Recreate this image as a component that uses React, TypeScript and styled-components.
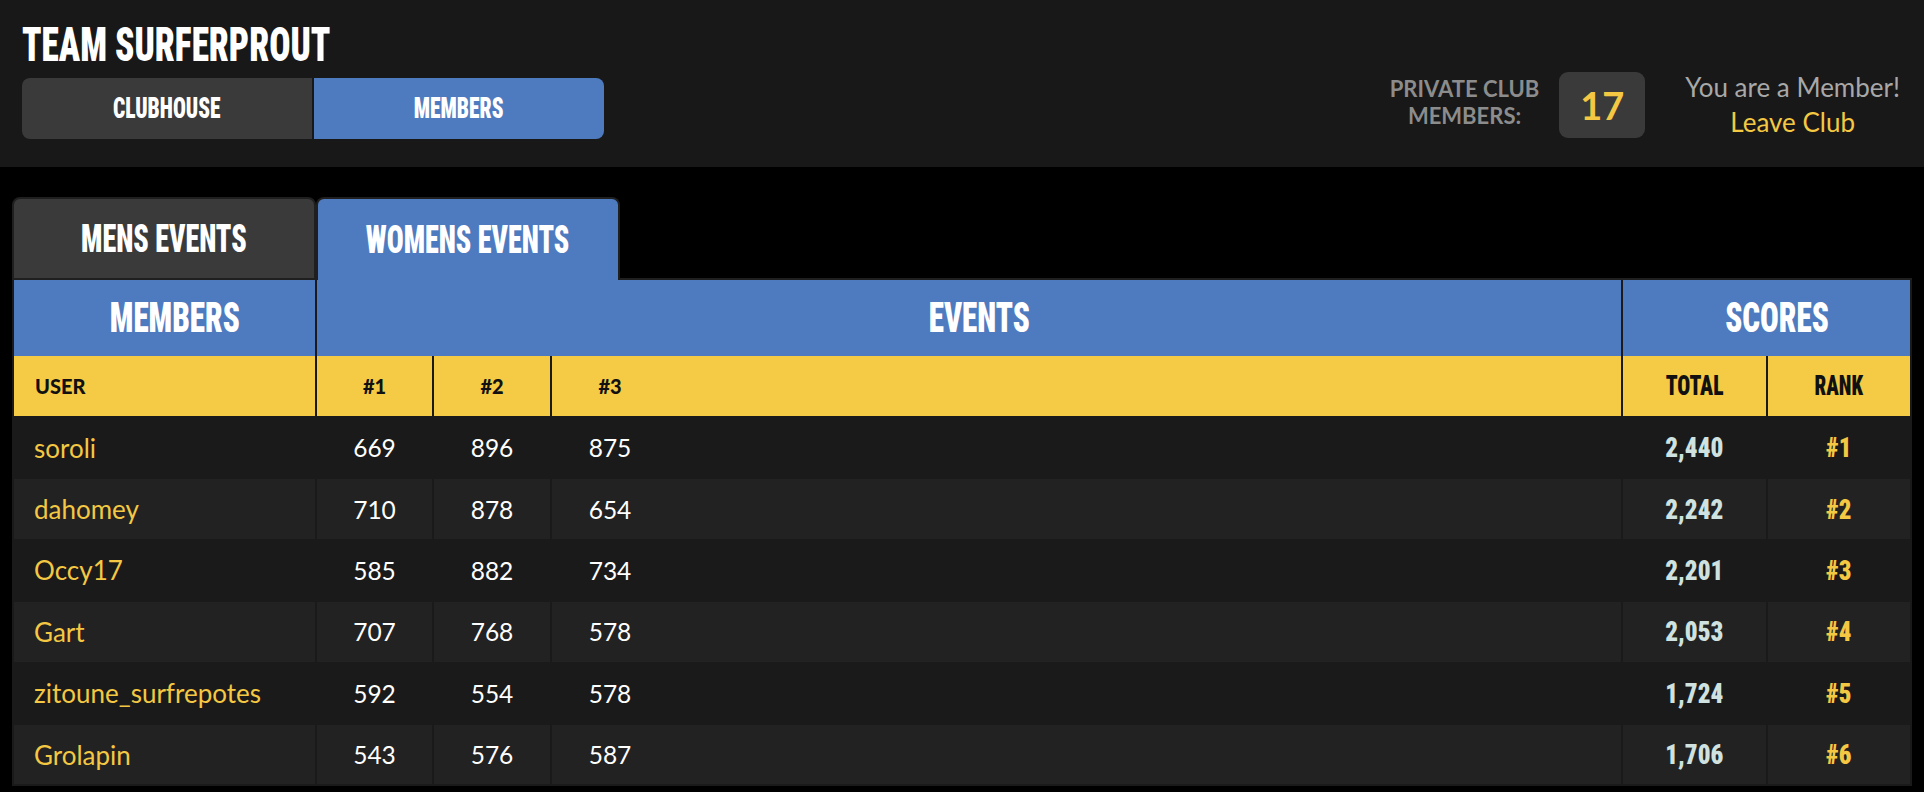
import React from "react";
import styled, { createGlobalStyle } from "styled-components";

const BLUE = "#4e7bbf";
const YELLOW = "#f5ca45";
const GOLD = "#f4c842";
const DARK = "#1a1a1a";

const GlobalStyle = createGlobalStyle`
  html, body { margin: 0; padding: 0; background: #000; }
  body { font-family: Lato, "Open Sans", sans-serif; color: #fff; }
  *, *::before, *::after { box-sizing: border-box; }
`;

const Display = styled.span<{ $size: number; $origin?: string; $sx?: number }>`
  display: inline-block;
  font-family: Roboto, "Open Sans", sans-serif;
  font-stretch: 75%;
  font-weight: 900;
  font-size: ${(p) => p.$size}px;
  line-height: 1;
  white-space: nowrap;
  transform: scaleX(${(p) => p.$sx ?? 0.74});
  transform-origin: ${(p) => p.$origin ?? "center"};
`;

/* ---------- top bar ---------- */
const TopBar = styled.header`
  height: 167px;
  background: #181818;
  padding: 21px 24px 0 22px;
  display: flex;
  justify-content: space-between;
  align-items: flex-start;
`;

const Brand = styled.div`
  display: flex;
  flex-direction: column;
  gap: 9px;
`;

const Title = styled.h1`
  margin: 0;
  height: 48px;
  line-height: 48px;
  color: #fff;
`;

const NavGroup = styled.nav`
  display: flex;
  gap: 2px;
  width: 582px;
  border-radius: 8px;
  overflow: hidden;
`;

const NavButton = styled.button<{ $active?: boolean }>`
  flex: 1;
  height: 61px;
  border: 0;
  padding: 0;
  background: ${(p) => (p.$active ? BLUE : "#3a3a3a")};
  color: #fff;
  display: flex;
  align-items: center;
  justify-content: center;
  cursor: pointer;
`;

const ClubInfo = styled.div`
  display: flex;
  align-items: center;
  padding-top: 51px;
`;

const CountLabel = styled.div`
  font-weight: 700;
  font-size: 22px;
  line-height: 27px;
  color: #8c8c8c;
  text-align: center;
  margin-top: -8px;
`;

const CountBox = styled.div`
  width: 86px;
  height: 66px;
  margin: -3px 40px 0 20px;
  background: #3a3a3a;
  border-radius: 9px;
  display: flex;
  align-items: center;
  justify-content: center;
  font-weight: 700;
  font-size: 38px;
  color: ${GOLD};
`;

const Membership = styled.div`
  text-align: center;
  font-size: 26px;
  line-height: 35px;
  color: #a8a8a8;
  margin-top: -2px;
`;

const LeaveLink = styled.a`
  display: block;
  color: ${GOLD};
  text-decoration: none;
  cursor: pointer;
`;

/* ---------- main ---------- */
const Main = styled.main`
  padding: 30px 12px 0;
`;

const TabBar = styled.div`
  display: flex;
  position: relative;
  z-index: 1;
  margin-bottom: -2px;
`;

const Tab = styled.button<{ $active?: boolean }>`
  width: 304px;
  height: 83px;
  padding: 0;
  border: 2px solid #1f1f1f;
  border-bottom: ${(p) => (p.$active ? "0" : "2px solid #1f1f1f")};
  border-radius: 8px 8px 0 0;
  background: ${(p) => (p.$active ? BLUE : "#3a3a3a")};
  color: #fff;
  display: flex;
  align-items: center;
  justify-content: center;
  cursor: pointer;
`;

const Board = styled.table`
  width: 100%;
  table-layout: fixed;
  border-collapse: separate;
  border-spacing: 2px 0;
  background: ${DARK};
  border-top: 2px solid #1f1f1f;
  padding-bottom: 2px;
`;

const GroupHead = styled.th`
  height: 76px;
  padding: 0 0 0 20px;
  background: ${BLUE};
  color: #fff;
  text-align: center;
  vertical-align: middle;
`;

const ColHead = styled.th<{ $left?: boolean }>`
  height: 60px;
  padding: 0 0 0 ${(p) => (p.$left ? "21px" : "0")};
  background: ${YELLOW};
  color: #111;
  text-align: ${(p) => (p.$left ? "left" : "center")};
  vertical-align: middle;
  font-weight: 900;
  font-size: 20px;
`;

const Cell = styled.td<{ $even: boolean; $left?: boolean }>`
  height: 61.4px;
  padding: 0 0 0 ${(p) => (p.$left ? "20px" : "0")};
  border-top: 2px solid ${DARK};
  background: ${(p) => (p.$even ? "#222222" : DARK)};
  text-align: ${(p) => (p.$left ? "left" : "center")};
  vertical-align: middle;
  font-size: 24.5px;
  color: #fff;
  white-space: nowrap;
`;

const UserName = styled.span`
  color: ${GOLD};
  font-size: 26px;
`;

const Slot = styled.span`
  display: block;
  width: 116px;
  text-align: center;
`;

const TotalValue = styled(Display)`
  color: #cfe2e0;
`;

const RankValue = styled(Display)`
  color: ${GOLD};
`;

type Row = { user: string; s: [number, number, number]; total: string; rank: number };

const rows: Row[] = [
  { user: "soroli", s: [669, 896, 875], total: "2,440", rank: 1 },
  { user: "dahomey", s: [710, 878, 654], total: "2,242", rank: 2 },
  { user: "Occy17", s: [585, 882, 734], total: "2,201", rank: 3 },
  { user: "Gart", s: [707, 768, 578], total: "2,053", rank: 4 },
  { user: "zitoune_surfrepotes", s: [592, 554, 578], total: "1,724", rank: 5 },
  { user: "Grolapin", s: [543, 576, 587], total: "1,706", rank: 6 },
];

export default function App() {
  return (
    <>
      <GlobalStyle />
      <TopBar>
        <Brand>
          <Title>
            <Display $size={48} $origin="left" $sx={0.735}>
              TEAM SURFERPROUT
            </Display>
          </Title>
          <NavGroup>
            <NavButton>
              <Display $size={29}>CLUBHOUSE</Display>
            </NavButton>
            <NavButton $active>
              <Display $size={29}>MEMBERS</Display>
            </NavButton>
          </NavGroup>
        </Brand>
        <ClubInfo>
          <CountLabel>
            PRIVATE CLUB
            <br />
            MEMBERS:
          </CountLabel>
          <CountBox>17</CountBox>
          <Membership>
            You are a Member!
            <LeaveLink>Leave Club</LeaveLink>
          </Membership>
        </ClubInfo>
      </TopBar>

      <Main>
        <TabBar>
          <Tab>
            <Display $size={38}>MENS EVENTS</Display>
          </Tab>
          <Tab $active>
            <Display $size={38}>WOMENS EVENTS</Display>
          </Tab>
        </TabBar>
        <Board>
          <colgroup>
            <col style={{ width: 301 }} />
            <col style={{ width: 115 }} />
            <col style={{ width: 116 }} />
            <col />
            <col style={{ width: 143 }} />
            <col style={{ width: 142 }} />
          </colgroup>
          <thead>
            <tr>
              <GroupHead>
                <Display $size={42}>MEMBERS</Display>
              </GroupHead>
              <GroupHead colSpan={3}>
                <Display $size={42}>EVENTS</Display>
              </GroupHead>
              <GroupHead colSpan={2}>
                <Display $size={42}>SCORES</Display>
              </GroupHead>
            </tr>
            <tr>
              <ColHead $left>USER</ColHead>
              <ColHead>#1</ColHead>
              <ColHead>#2</ColHead>
              <ColHead $left={false}>
                <Slot>#3</Slot>
              </ColHead>
              <ColHead>
                <Display $size={28} $sx={0.77}>
                  TOTAL
                </Display>
              </ColHead>
              <ColHead>
                <Display $size={28}>RANK</Display>
              </ColHead>
            </tr>
          </thead>
          <tbody>
            {rows.map((r, i) => {
              const even = i % 2 === 1;
              return (
                <tr key={r.user}>
                  <Cell $even={even} $left>
                    <UserName>{r.user}</UserName>
                  </Cell>
                  <Cell $even={even}>{r.s[0]}</Cell>
                  <Cell $even={even}>{r.s[1]}</Cell>
                  <Cell $even={even}>
                    <Slot>{r.s[2]}</Slot>
                  </Cell>
                  <Cell $even={even}>
                    <TotalValue $size={27} $sx={0.93}>
                      {r.total}
                    </TotalValue>
                  </Cell>
                  <Cell $even={even}>
                    <RankValue $size={27} $sx={0.92}>
                      #{r.rank}
                    </RankValue>
                  </Cell>
                </tr>
              );
            })}
          </tbody>
        </Board>
      </Main>
    </>
  );
}
